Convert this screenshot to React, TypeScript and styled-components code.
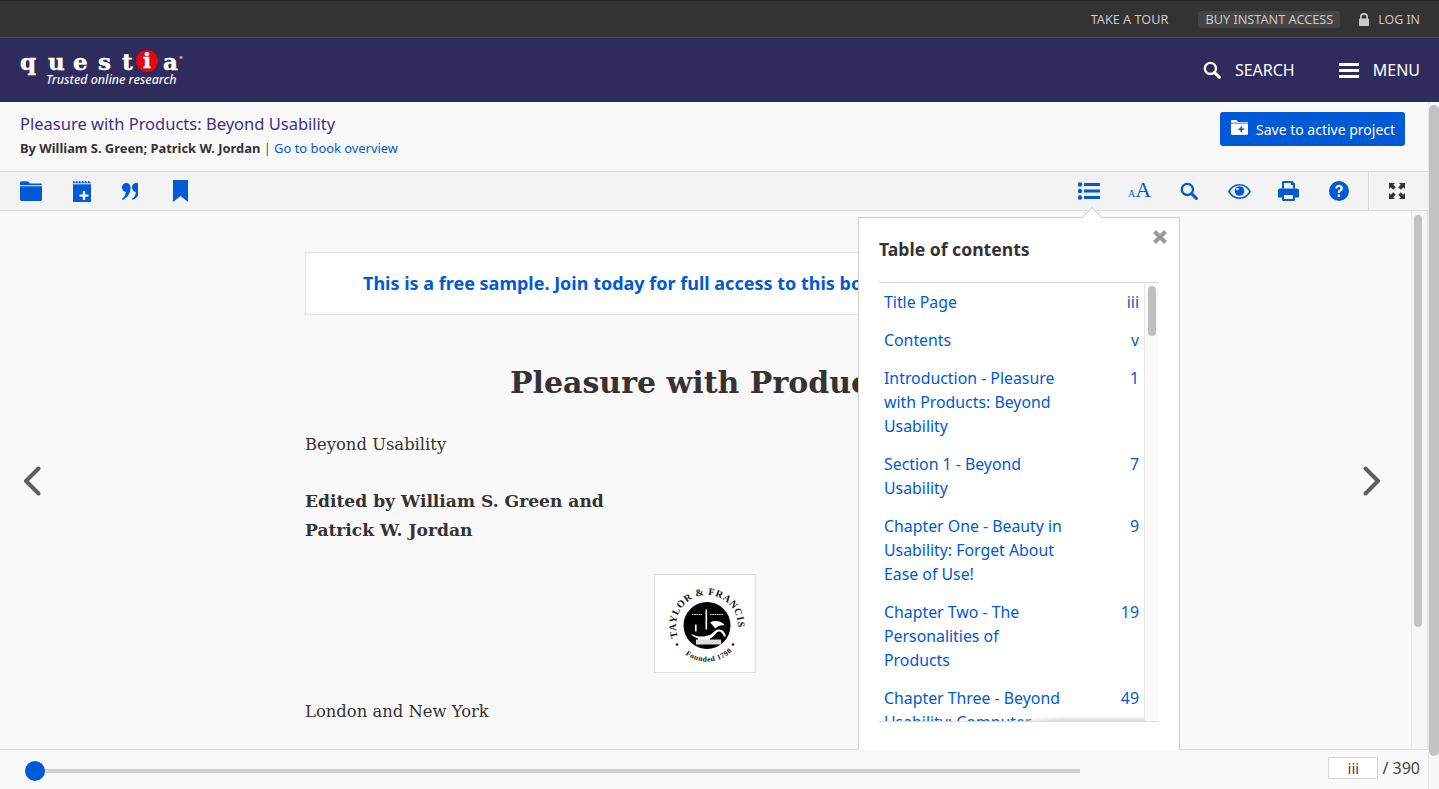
import React from "react";
import styled, { createGlobalStyle } from "styled-components";

const Global = createGlobalStyle`
  html, body { margin: 0; padding: 0; height: 100%; overflow: hidden; background: #f9f9f9; }
  #root { height: 100%; }
  * { box-sizing: border-box; }
`;

const BLUE = "#0059d6";
const SANS = `"Noto Sans", "Open Sans", sans-serif`;
const SERIF = `"DejaVu Serif", "Liberation Serif", serif`;

const Page = styled.div`
  width: 1439px;
  height: 789px;
  display: flex;
  flex-direction: column;
  overflow: hidden;
  font-family: ${SANS};
  color: #333;
  position: relative;
`;

const TopBar = styled.div`
  height: 38px;
  flex: none;
  background: #333;
  border-top: 1px solid #222;
  border-bottom: 1px solid #4a4a5a;
  display: flex;
  align-items: center;
  justify-content: flex-end;
  padding-right: 19px;
  font-size: 12.7px;
  color: #c8c8c8;
`;
const TopLink = styled.span`
  margin-right: 30px;
`;
const Access = styled.span`
  background: #454545;
  border-radius: 3px;
  padding: 0 7px;
  height: 17px;
  line-height: 17px;
  margin-right: 19px;
`;
const Login = styled.span`
  display: flex;
  align-items: center;
  gap: 9px;
  padding-top: 1px;
  font-size: 12.4px;
`;

const NavBar = styled.div`
  height: 64px;
  flex: none;
  background: #302b5d;
  display: flex;
  align-items: center;
  justify-content: space-between;
  padding: 0 19px 0 20px;
  color: #fff;
`;
const Logo = styled.div`
  display: flex;
  flex-direction: column;
  margin-top: -4px;
`;
const LogoWord = styled.div`
  display: flex;
  align-items: center;
  height: 24px;
  font-family: ${SERIF};
  font-weight: 700;
  font-size: 23px;
  line-height: 24px;
  color: #fff;
  -webkit-text-stroke: 0.5px #fff;
`;
const LogoLetter = styled.span<{ $w: number }>`
  width: ${(p) => p.$w}px;
  padding-top: 2px;
`;
const LogoDot = styled.span`
  width: 22px;
  height: 22px;
  border-radius: 50%;
  background: #e30613;
  text-align: center;
  line-height: 21px;
  margin-right: 5px;
  font-size: 21px;
`;
const LogoMark = styled.span`
  font-size: 4px;
  line-height: 5px;
  align-self: flex-start;
  margin-top: 6px;
  -webkit-text-stroke: 0;
`;
const Tagline = styled.div`
  font-family: ${SANS};
  font-style: italic;
  font-weight: 500;
  font-size: 12.4px;
  line-height: 14px;
  margin: 0 0 0 26px;
  color: #f3f3f3;
`;
const NavActions = styled.div`
  display: flex;
  align-items: center;
`;
const NavItem = styled.div`
  display: flex;
  align-items: center;
  font-size: 16px;
  gap: 14px;
  margin-left: 44px;
`;

const Header = styled.div`
  height: 70px;
  flex: none;
  background: #f9f9f9;
  border-bottom: 1px solid #dcdcdc;
  padding: 11px 34px 0 20px;
  display: flex;
  justify-content: space-between;
  align-items: flex-start;
`;
const BookTitle = styled.div`
  font-size: 16.5px;
  line-height: 22px;
  color: #3d2f8c;
`;
const Byline = styled.div`
  font-size: 12.9px;
  line-height: 18px;
  margin-top: 4px;
  color: #555;
`;
const Authors = styled.b`
  color: #333;
`;
const TextLink = styled.span`
  color: ${BLUE};
`;
const SaveButton = styled.div`
  height: 34px;
  width: 185px;
  margin-top: -1px;
  background: ${BLUE};
  border-radius: 3px;
  color: #fff;
  font-size: 14px;
  display: flex;
  align-items: center;
  padding: 0 0 0 11px;
  gap: 8px;
`;
const SaveIcon = styled.span`
  display: block;
  margin-top: -3px;
`;

const Toolbar = styled.div`
  height: 39px;
  flex: none;
  background: #f3f3f3;
  border-bottom: 1px solid #dcdcdc;
  display: flex;
  align-items: stretch;
  justify-content: space-between;
  padding: 0 0 0 20px;
  margin-right: 11px;
`;
const ToolGroup = styled.div`
  display: flex;
  align-items: stretch;
`;
const ToolSlot = styled.div<{ $w: number }>`
  width: ${(p) => p.$w}px;
  display: flex;
  align-items: center;
  justify-content: flex-start;
`;
const ExpandSlot = styled.div`
  width: 60px;
  border-left: 1px solid #dcdcdc;
  margin-left: 17px;
  display: flex;
  align-items: center;
  justify-content: center;
  padding-right: 3px;
`;

const Body = styled.div`
  flex: 1;
  min-height: 0;
  display: flex;
  position: relative;
  margin-right: 11px;
  border-right: 1px solid #e4e4e4;
`;
const Reader = styled.div`
  flex: 1;
  min-width: 0;
  background: #f9f9f9;
  display: flex;
  border-bottom: 1px solid #dcdcdc;
`;
const Arrow = styled.div`
  flex: none;
  display: flex;
  align-items: flex-start;
  justify-content: center;
  padding-top: 255px;
`;
const LeftArrow = styled(Arrow)`
  width: 63px;
`;
const RightArrow = styled(Arrow)`
  width: 64px;
  padding-right: 14px;
`;
const Sheet = styled.div`
  flex: 1;
  min-width: 0;
  display: flex;
  justify-content: center;
  overflow: hidden;
`;
const SheetInner = styled.div`
  width: 800px;
  flex: none;
  padding-top: 41px;
`;
const Notice = styled.div`
  height: 63px;
  border: 1px solid #e0e0e0;
  background: #fff;
  color: ${BLUE};
  font-size: 18px;
  font-weight: 700;
  line-height: 60px;
  padding-left: 57px;
  white-space: nowrap;
  overflow: hidden;
`;
const BookHeading = styled.h1`
  margin: 48px 0 0;
  font-family: ${SERIF};
  font-size: 30px;
  font-weight: 700;
  line-height: 40px;
  text-align: center;
  color: #333;
`;
const BookLine = styled.p`
  margin: 27px 0 0;
  font-family: ${SERIF};
  font-size: 16.4px;
  line-height: 29px;
  color: #333;
`;
const Editors = styled(BookLine)`
  margin-top: 28px;
  font-size: 17.1px;
  font-weight: 700;
`;
const PlateRow = styled.div`
  margin-top: 29px;
  display: flex;
  justify-content: center;
`;
const Plate = styled.div`
  width: 102px;
  height: 99px;
  background: #fff;
  border: 1px solid #e0e0e0;
  display: flex;
  align-items: center;
  justify-content: center;
`;
const Imprint = styled(BookLine)`
  margin-top: 24px;
`;

const ScrollTrack = styled.div`
  flex: none;
  width: 16px;
  background: #f7f7f7;
  border-left: 1px solid #e8e8e8;
  padding: 4px 5px 0 2px;
  border-bottom: 1px solid #dcdcdc;
`;
const ScrollThumb = styled.div<{ $h: number }>`
  height: ${(p) => p.$h}px;
  border-radius: 5px;
  background: #c2c2c2;
`;
const PageScroll = styled.div`
  position: absolute;
  top: 102px;
  right: 0;
  bottom: 0;
  width: 11px;
  background: #f6f6f6;
  padding: 3px 0 0 0;
  border-left: 1px solid #e8e8e8;
`;

const Popover = styled.div`
  position: absolute;
  left: 858px;
  top: 6px;
  width: 322px;
  height: 533px;
  background: #fff;
  border: 1px solid #cfcfcf;
  border-bottom: none;
  padding: 0 20px 0 20px;
`;
const Caret = styled.div`
  position: absolute;
  left: 226px;
  top: -8px;
  width: 14px;
  height: 14px;
  background: #fff;
  border-left: 1px solid #cfcfcf;
  border-top: 1px solid #cfcfcf;
  transform: rotate(45deg);
`;
const PopTitle = styled.div`
  font-size: 17.6px;
  font-weight: 700;
  line-height: 24px;
  padding-top: 19px;
  height: 64px;
  color: #333;
`;
const Close = styled.div`
  position: absolute;
  right: 12px;
  top: 12px;
  line-height: 0;
`;
const TocBox = styled.div`
  width: 280px;
  height: 440px;
  border-top: 1px solid #dcdcdc;
  border-bottom: 1px solid #dcdcdc;
  display: flex;
  position: relative;
  overflow: hidden;
`;
const TocList = styled.div`
  flex: 1;
  min-width: 0;
  padding: 7px 5px 0 5px;
`;
const TocRow = styled.div`
  display: flex;
  justify-content: space-between;
  color: ${BLUE};
  font-size: 15.85px;
  line-height: 24px;
  margin-bottom: 14px;
`;
const TocLabel = styled.div`
  width: 186px;
`;
const TocFade = styled.div`
  position: absolute;
  left: 130px;
  right: 15px;
  bottom: 0;
  height: 5px;
  background: linear-gradient(to top, #d8d8d8, #ffffff00);
  mask-image: linear-gradient(90deg, transparent, #000 40%);
`;
const TocTrack = styled.div`
  flex: none;
  width: 15px;
  background: #fafafa;
  border-left: 1px solid #e8e8e8;
  padding: 3px 3px 0 3px;
`;
const TocThumb = styled.div`
  height: 50px;
  border-radius: 4px;
  background: #c0c0c0;
`;

const Footer = styled.div`
  height: 39px;
  flex: none;
  background: #f9f9f9;
  margin-right: 11px;
  display: flex;
  align-items: center;
  padding-left: 25px;
`;
const SliderWrap = styled.div`
  width: 1055px;
  height: 4px;
  margin-top: 3px;
  background: #d0d0d0;
  position: relative;
`;
const Knob = styled.div`
  position: absolute;
  left: 0;
  top: -8px;
  width: 20px;
  height: 20px;
  border-radius: 50%;
  background: ${BLUE};
`;
const Pager = styled.div`
  margin-left: auto;
  margin-bottom: 3px;
  display: flex;
  align-items: center;
  font-size: 16px;
  color: #444;
  gap: 4px;
  padding-right: 8px;
`;
const PageBox = styled.div`
  width: 50px;
  height: 22px;
  background: #fff;
  border: 1px solid #d8d8d8;
  text-align: center;
  line-height: 20px;
  font-size: 15px;
`;

const AaWrap = styled.div`
  font-family: "Liberation Serif", serif;
  color: ${BLUE};
  display: flex;
  align-items: baseline;
  line-height: 22px;
  margin-top: 1px;
`;
const AaSmall = styled.span`
  font-size: 10px;
`;
const AaBig = styled.span`
  font-size: 22px;
  margin-left: 0;
`;

const Ico: React.FC<{ w: number; h: number; vb: string; fill?: string; children: React.ReactNode }> = ({ w, h, vb, fill = BLUE, children }) => (
  <svg width={w} height={h} viewBox={vb} fill={fill} style={{ display: "block" }}>
    {children}
  </svg>
);

const SearchGlyph: React.FC<{ size: number; color: string }> = ({ size, color }) => (
  <svg width={size} height={size} viewBox="0 0 18 18" fill="none" stroke={color} style={{ display: "block" }}>
    <circle cx="7.4" cy="7.4" r="5.6" strokeWidth="2.3" />
    <path d="M11.6 11.6 L16.4 16.4" strokeWidth="2.9" strokeLinecap="round" />
  </svg>
);

const toc: [string[], string][] = [
  [["Title Page"], "iii"],
  [["Contents"], "v"],
  [["Introduction - Pleasure", "with Products: Beyond", "Usability"], "1"],
  [["Section 1 - Beyond", "Usability"], "7"],
  [["Chapter One - Beauty in", "Usability: Forget About", "Ease of Use!"], "9"],
  [["Chapter Two - The", "Personalities of", "Products"], "19"],
  [["Chapter Three - Beyond", "Usability: Computer"], "49"],
];

const Seal = () => (
  <svg width="88" height="86" viewBox="0 0 88 86" style={{ overflow: "visible" }}>
    <defs>
      <path id="sealTop" d="M17 56 A31 31 0 1 1 75 56" fill="none" />
      <path id="sealBottom" d="M19 68.500 A36 36 0 0 0 73 68.500" fill="none" />
    </defs>
    <circle cx="46" cy="44.500" r="23.500" fill="#000" />
    <text fontFamily="Liberation Serif, serif" fontSize="10" fontWeight="700" fill="#111" letterSpacing="0.7">
      <textPath href="#sealTop">TAYLOR &amp; FRANCIS</textPath>
    </text>
    <text fontFamily="Liberation Serif, serif" fontSize="7.500" fontWeight="700" fill="#111" letterSpacing="0.5">
      <textPath href="#sealBottom" startOffset="12%">Founded 1798</textPath>
    </text>
    <circle cx="16" cy="63.500" r="1.200" fill="#111" />
    <circle cx="72" cy="63.500" r="1.200" fill="#111" />
    <g transform="translate(2 0.5)">
      <path d="M29 33h10M47 33h13" stroke="#fff" strokeWidth="1.200" strokeDasharray="1.500 0.800" />
      <rect x="42.500" y="28" width="1.600" height="20" fill="#fff" />
      <path d="M47 41c6-3 12-1 15 3-5-1-7 1-10 3-1-2-3-4-5-6z" fill="#fff" />
      <path d="M30 53c5 3 11 2 15 1 5-1 6-6 11-6 4 0 6 3 7 7l-2 0c-1-3-3-5-5-5-3 0-4 5-9 7v3H35v-3c-2-1-5-2-7-4z" fill="#fff" />
      <rect x="32" y="43" width="1.600" height="7" fill="#fff" />
      <rect x="33" y="58" width="25" height="5" fill="#dcdcdc" />
    </g>
  </svg>
);

export default function App() {
  return (
    <Page>
      <Global />
      <TopBar>
        <TopLink>TAKE A TOUR</TopLink>
        <Access>BUY INSTANT ACCESS</Access>
        <Login>
          <Ico w={10} h={13} vb="0 0 10 13" fill="#c8c8c8">
            <path d="M1 5.500V4a4 4 0 0 1 8 0v1.500h.2c.5 0 .8.3.8.8v5.900c0 .5-.3.8-.8.8H.8c-.5 0-.8-.3-.8-.8V6.300c0-.5.3-.8.8-.8zM2.700 5.500h4.600V4a2.300 2.300 0 0 0-4.600 0z" />
          </Ico>
          LOG IN
        </Login>
      </TopBar>

      <NavBar>
        <Logo>
          <LogoWord>
            <LogoLetter $w={28}>q</LogoLetter>
            <LogoLetter $w={25}>u</LogoLetter>
            <LogoLetter $w={25}>e</LogoLetter>
            <LogoLetter $w={24}>s</LogoLetter>
            <LogoLetter $w={14}>t</LogoLetter>
            <LogoDot>i</LogoDot>
            <LogoLetter $w={16}>a</LogoLetter>
            <LogoMark>®</LogoMark>
          </LogoWord>
          <Tagline>Trusted online research</Tagline>
        </Logo>
        <NavActions>
          <NavItem>
            <SearchGlyph size={18} color="#fff" />
            SEARCH
          </NavItem>
          <NavItem>
            <Ico w={20} h={15} vb="0 0 20 15" fill="#fff">
              <rect width="20" height="3" />
              <rect y="6" width="20" height="3" />
              <rect y="12" width="20" height="3" />
            </Ico>
            MENU
          </NavItem>
        </NavActions>
      </NavBar>

      <Header>
        <div>
          <BookTitle>Pleasure with Products: Beyond Usability</BookTitle>
          <Byline>
            <Authors>By William S. Green; Patrick W. Jordan</Authors> | <TextLink>Go to book overview</TextLink>
          </Byline>
        </div>
        <SaveButton>
          <SaveIcon>
            <Ico w={17} h={15} vb="0 0 17 15" fill="#fff">
              <path d="M0 1.200C0 .5.500 0 1.200 0h4.300l1.600 2H16c.6 0 1 .4 1 1v10.800c0 .7-.5 1.200-1.200 1.200H1.200C.5 15 0 14.500 0 13.800z" />
              <path d="M0 3.200h17" stroke="#0059d6" strokeWidth="0.800" />
              <path d="M11 6.500v2h2v1.600h-2v2H9.400v-2h-2V8.500h2v-2z" fill="#0059d6" />
            </Ico>
          </SaveIcon>
          Save to active project
        </SaveButton>
      </Header>

      <Toolbar>
        <ToolGroup>
          <ToolSlot $w={53}>
            <Ico w={22} h={20} vb="0 0 22 20">
              <path d="M0 2c0-1 .7-1.800 1.700-1.800h6.200L10 2.500h10.500c.9 0 1.500.6 1.500 1.500v.3H0z" />
              <path d="M0 5.200h22v13c0 1-.7 1.800-1.700 1.800H1.700C.7 20 0 19.200 0 18.200z" />
            </Ico>
          </ToolSlot>
          <ToolSlot $w={49}>
            <Ico w={18} h={21} vb="0 0 18 21">
              <path d="M0 0h1.500v1.500H3V0h1.500v1.500H6V0h1.500v1.500H9V0h1.500v1.500H12V0h1.500v1.500H15V0h1.500v1.500H18V2.200H0z" />
              <path d="M0 3.300h18V21H0z" />
              <path d="M12.200 10v3.500h3.300v2.300h-3.300v3.200H9.800v-3.200H6.500v-2.300h3.300V10z" fill="#f3f3f3" />
            </Ico>
          </ToolSlot>
          <ToolSlot $w={51}>
            <Ico w={16} h={17} vb="0 0 16 17">
              <path d="M4.300 0c2.600 0 4.300 1.900 4.300 4.800 0 5.400-3.400 10.400-8.100 12.200L0 15.700c2.200-1.300 3.500-3.200 3.800-6.800C1.500 8.600 0 6.900 0 4.500 0 1.900 1.800 0 4.300 0z" />
              <path d="M14.300 0c2.600 0 4.300 1.900 4.300 4.800 0 5.400-3.400 10.400-8.100 12.200l-.5-1.300c2.200-1.300 3.500-3.200 3.800-6.800-2.300-.3-3.800-2-3.800-4.400C10 1.900 11.800 0 14.300 0z" />
            </Ico>
          </ToolSlot>
          <ToolSlot $w={20}>
            <Ico w={15} h={22} vb="0 0 15 22">
              <path d="M0 0h15v22l-7.500-6L0 22z" />
            </Ico>
          </ToolSlot>
        </ToolGroup>
        <ToolGroup>
          <ToolSlot $w={50}>
            <Ico w={22} h={18} vb="0 0 22 18">
              <circle cx="2" cy="2.500" r="2.200" />
              <circle cx="2" cy="9" r="2.200" />
              <circle cx="2" cy="15.500" r="2.200" />
              <rect x="6" y="1" width="16" height="3" rx=".5" />
              <rect x="6" y="7.500" width="16" height="3" rx=".5" />
              <rect x="6" y="14" width="16" height="3" rx=".5" />
            </Ico>
          </ToolSlot>
          <ToolSlot $w={52}>
            <AaWrap>
              <AaSmall>A</AaSmall>
              <AaBig>A</AaBig>
            </AaWrap>
          </ToolSlot>
          <ToolSlot $w={48}>
            <SearchGlyph size={18} color={BLUE} />
          </ToolSlot>
          <ToolSlot $w={50}>
            <Ico w={23} h={15} vb="0 0 23 15">
              <path fillRule="evenodd" d="M11.500 0C16.500 0 20.700 3 23 7.500 20.700 12 16.500 15 11.500 15S2.300 12 0 7.500C2.300 3 6.500 0 11.500 0zM11.500 1.600C7.400 1.600 4 3.900 2 7.500c2 3.600 5.400 5.900 9.500 5.900s7.500-2.300 9.500-5.900c-2-3.600-5.400-5.900-9.500-5.900z" />
              <circle cx="11.500" cy="7" r="4.800" />
              <circle cx="9.500" cy="5" r="1.300" fill="#f3f3f3" />
            </Ico>
          </ToolSlot>
          <ToolSlot $w={51}>
            <Ico w={21} h={20} vb="0 0 21 20">
              <path d="M4 1.500C4 .7 4.700 0 5.500 0h8.700l2.800 2.800V7.500h-2V4h-2V2H6v5.500H4z" />
              <path fillRule="evenodd" d="M2 7.500h17c1.100 0 2 .9 2 2v6c0 .6-.4 1-1 1h-3v2c0 .8-.7 1.500-1.500 1.500h-10C4.700 20 4 19.300 4 18.500v-2H1c-.6 0-1-.4-1-1v-6c0-1.100.9-2 2-2zM6 14v4h9v-4z" />
            </Ico>
          </ToolSlot>
          <ToolSlot $w={22}>
            <Ico w={20} h={20} vb="0 0 20 20">
              <circle cx="10" cy="10" r="10" />
              <path d="M6.200 7.400C6.500 5 8 3.800 10.200 3.800c2.200 0 3.900 1.300 3.900 3.300 0 1.500-.8 2.300-1.800 3-.8.500-1.200.9-1.200 1.800H8.700c0-1.700.6-2.500 1.700-3.200.7-.5 1.100-.9 1.100-1.500 0-.8-.6-1.300-1.400-1.300-.9 0-1.400.6-1.500 1.700zM8.700 13.400h2.400v2.600H8.700z" fill="#f3f3f3" />
            </Ico>
          </ToolSlot>
          <ExpandSlot>
            <Ico w={16} h={16} vb="0 0 16 16" fill="#333">
              <path d="M0 0h6L4.300 1.700 6.800 4.200 4.200 6.800 1.700 4.300 0 6zM16 0v6l-1.700-1.700-2.500 2.500-2.600-2.600 2.500-2.500L10 0zM0 16v-6l1.700 1.700 2.500-2.500 2.600 2.600-2.500 2.500L6 16zM16 16h-6l1.700-1.700-2.500-2.500 2.600-2.600 2.500 2.500L16 10z" />
            </Ico>
          </ExpandSlot>
        </ToolGroup>
      </Toolbar>

      <Body>
        <Reader>
          <LeftArrow>
            <Ico w={18} h={30} vb="0 0 18 30" fill="none">
              <path d="M15.500 2.500 L3 15 L15.500 27.500" stroke="#5f5f5f" strokeWidth="4" strokeLinecap="round" strokeLinejoin="round" />
            </Ico>
          </LeftArrow>
          <Sheet>
            <SheetInner>
              <Notice>This is a free sample. Join today for full access to this book.</Notice>
              <BookHeading>Pleasure with Products</BookHeading>
              <BookLine>Beyond Usability</BookLine>
              <Editors>
                Edited by William S. Green and
                <br />
                Patrick W. Jordan
              </Editors>
              <PlateRow>
                <Plate>
                  <Seal />
                </Plate>
              </PlateRow>
              <Imprint>London and New York</Imprint>
            </SheetInner>
          </Sheet>
          <RightArrow>
            <Ico w={18} h={30} vb="0 0 18 30" fill="none">
              <path d="M2.500 2.500 L15 15 L2.500 27.500" stroke="#5f5f5f" strokeWidth="4" strokeLinecap="round" strokeLinejoin="round" />
            </Ico>
          </RightArrow>
        </Reader>
        <ScrollTrack>
          <ScrollThumb $h={412} />
        </ScrollTrack>
        <Popover>
          <Caret />
          <Close>
            <Ico w={14} h={14} vb="0 0 14 14" fill="none">
              <path d="M1.500 1.500 L12.500 12.500 M12.500 1.500 L1.500 12.500" stroke="#999" strokeWidth="4" />
            </Ico>
          </Close>
          <PopTitle>Table of contents</PopTitle>
          <TocBox>
            <TocList>
              {toc.map(([lines, num]) => (
                <TocRow key={lines[0]}>
                  <TocLabel>
                    {lines.map((l) => (
                      <div key={l}>{l}</div>
                    ))}
                  </TocLabel>
                  <div>{num}</div>
                </TocRow>
              ))}
            </TocList>
            <TocFade />
            <TocTrack>
              <TocThumb />
            </TocTrack>
          </TocBox>
        </Popover>
      </Body>

      <Footer>
        <SliderWrap>
          <Knob />
        </SliderWrap>
        <Pager>
          <PageBox>iii</PageBox>/ 390
        </Pager>
      </Footer>

      <PageScroll>
        <ScrollThumb $h={651} />
      </PageScroll>
    </Page>
  );
}
